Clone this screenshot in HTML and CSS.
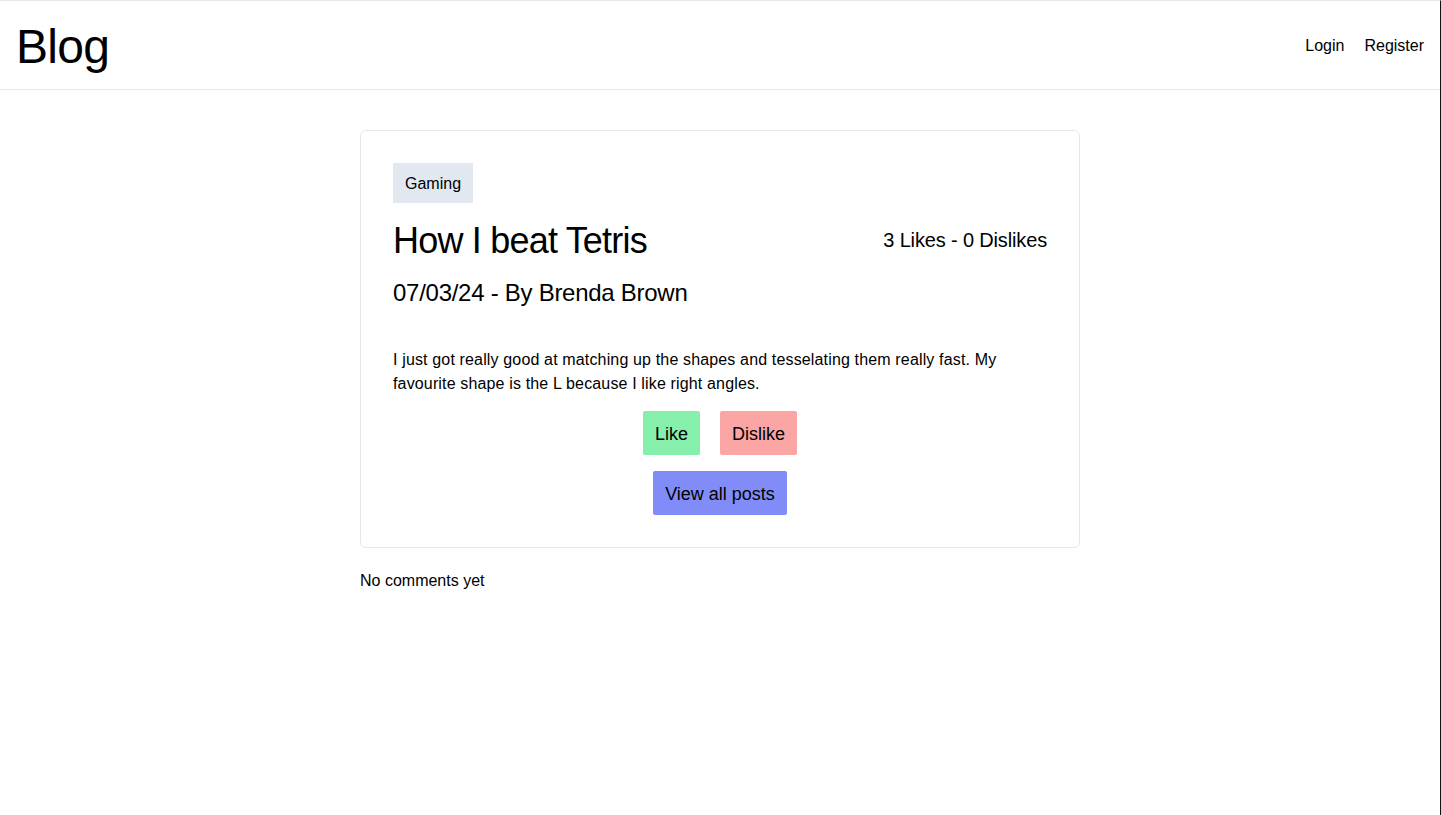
FILE: index.html
```html
<!DOCTYPE html>
<html lang="en">
<head>
<meta charset="utf-8">
<title>Blog</title>
<link rel="stylesheet" href="styles.css">
</head>
<body>
<div class="page">
<header class="site-header">
  <a class="brand" href="#">Blog</a>
  <nav class="nav">
    <a href="#">Login</a>
    <a href="#">Register</a>
  </nav>
</header>
<main class="main">
  <article class="card">
    <div class="tag-row"><span class="tag">Gaming</span></div>
    <div class="title-row">
      <h1 class="title">How I beat Tetris</h1>
      <div class="votes">3 Likes - 0 Dislikes</div>
    </div>
    <h2 class="meta">07/03/24 - By Brenda Brown</h2>
    <p class="body-text">I just got really good at matching up the shapes and tesselating them really fast. My favourite shape is the L because I like right angles.</p>
    <div class="actions actions-vote">
      <button class="btn btn-like">Like</button>
      <button class="btn btn-dislike">Dislike</button>
    </div>
    <div class="actions">
      <button class="btn btn-all">View all posts</button>
    </div>
  </article>
  <p class="comments">No comments yet</p>
</main>
</div>
</body>
</html>
```

FILE: styles.css
```css
* { box-sizing: border-box; }
html, body { margin: 0; padding: 0; }
body {
  font-family: "Liberation Sans", Arial, Helvetica, sans-serif;
  color: #000;
  background: #fff;
}
.page {
  min-height: 815px;
  border-top: 1px solid #e5e7eb;
  border-right: 1px solid #111;
}
a { color: inherit; text-decoration: none; }
.site-header {
  display: flex;
  align-items: center;
  justify-content: space-between;
  padding: 20px 16px;
  border-bottom: 1px solid #e5e7eb;
}
.brand {
  font-size: 48px;
  line-height: 48px;
  letter-spacing: -0.75px;
  padding-top: 2px;
  margin-bottom: -2px;
}
.nav {
  display: flex;
  gap: 20px;
  font-size: 16px;
  line-height: 24px;
  padding-top: 1px;
  margin-bottom: -1px;
}
.main {
  width: 720px;
  margin: 40px auto 0;
}
.card {
  border: 1px solid #e5e7eb;
  border-radius: 6px;
  padding: 32px;
}
.tag-row { display: flex; }
.tag {
  background: #e2e8f0;
  font-size: 16px;
  line-height: 24px;
  padding: 9px 12px 7px;
}
.title-row {
  display: flex;
  align-items: center;
  justify-content: space-between;
  margin-top: 18px;
}
.title {
  margin: 0;
  font-size: 36px;
  line-height: 40px;
  font-weight: 400;
  letter-spacing: -0.8px;
}
.votes {
  font-size: 20px;
  line-height: 28px;
  letter-spacing: -0.15px;
  margin-bottom: 3px;
}
.meta {
  margin: 16px 0 0;
  font-size: 24px;
  line-height: 32px;
  font-weight: 400;
  letter-spacing: -0.27px;
}
.body-text {
  margin: 39px 0 0;
  font-size: 16px;
  line-height: 24px;
  letter-spacing: 0.15px;
}
.actions {
  display: flex;
  justify-content: center;
  gap: 20px;
  margin-top: 16px;
}
.actions-vote { margin-top: 15px; }
.btn {
  font-family: inherit;
  font-size: 18px;
  line-height: 28px;
  padding: 9px 12px 7px;
  border: 0;
  border-radius: 2px;
  color: #000;
  cursor: pointer;
}
.btn-like { background: #86efac; }
.btn-dislike { background: #fca5a5; }
.btn-all { background: #818cf8; }
.comments {
  margin: 20px 0 0;
  font-size: 16px;
  line-height: 24px;
  padding-top: 1px;
}
```
